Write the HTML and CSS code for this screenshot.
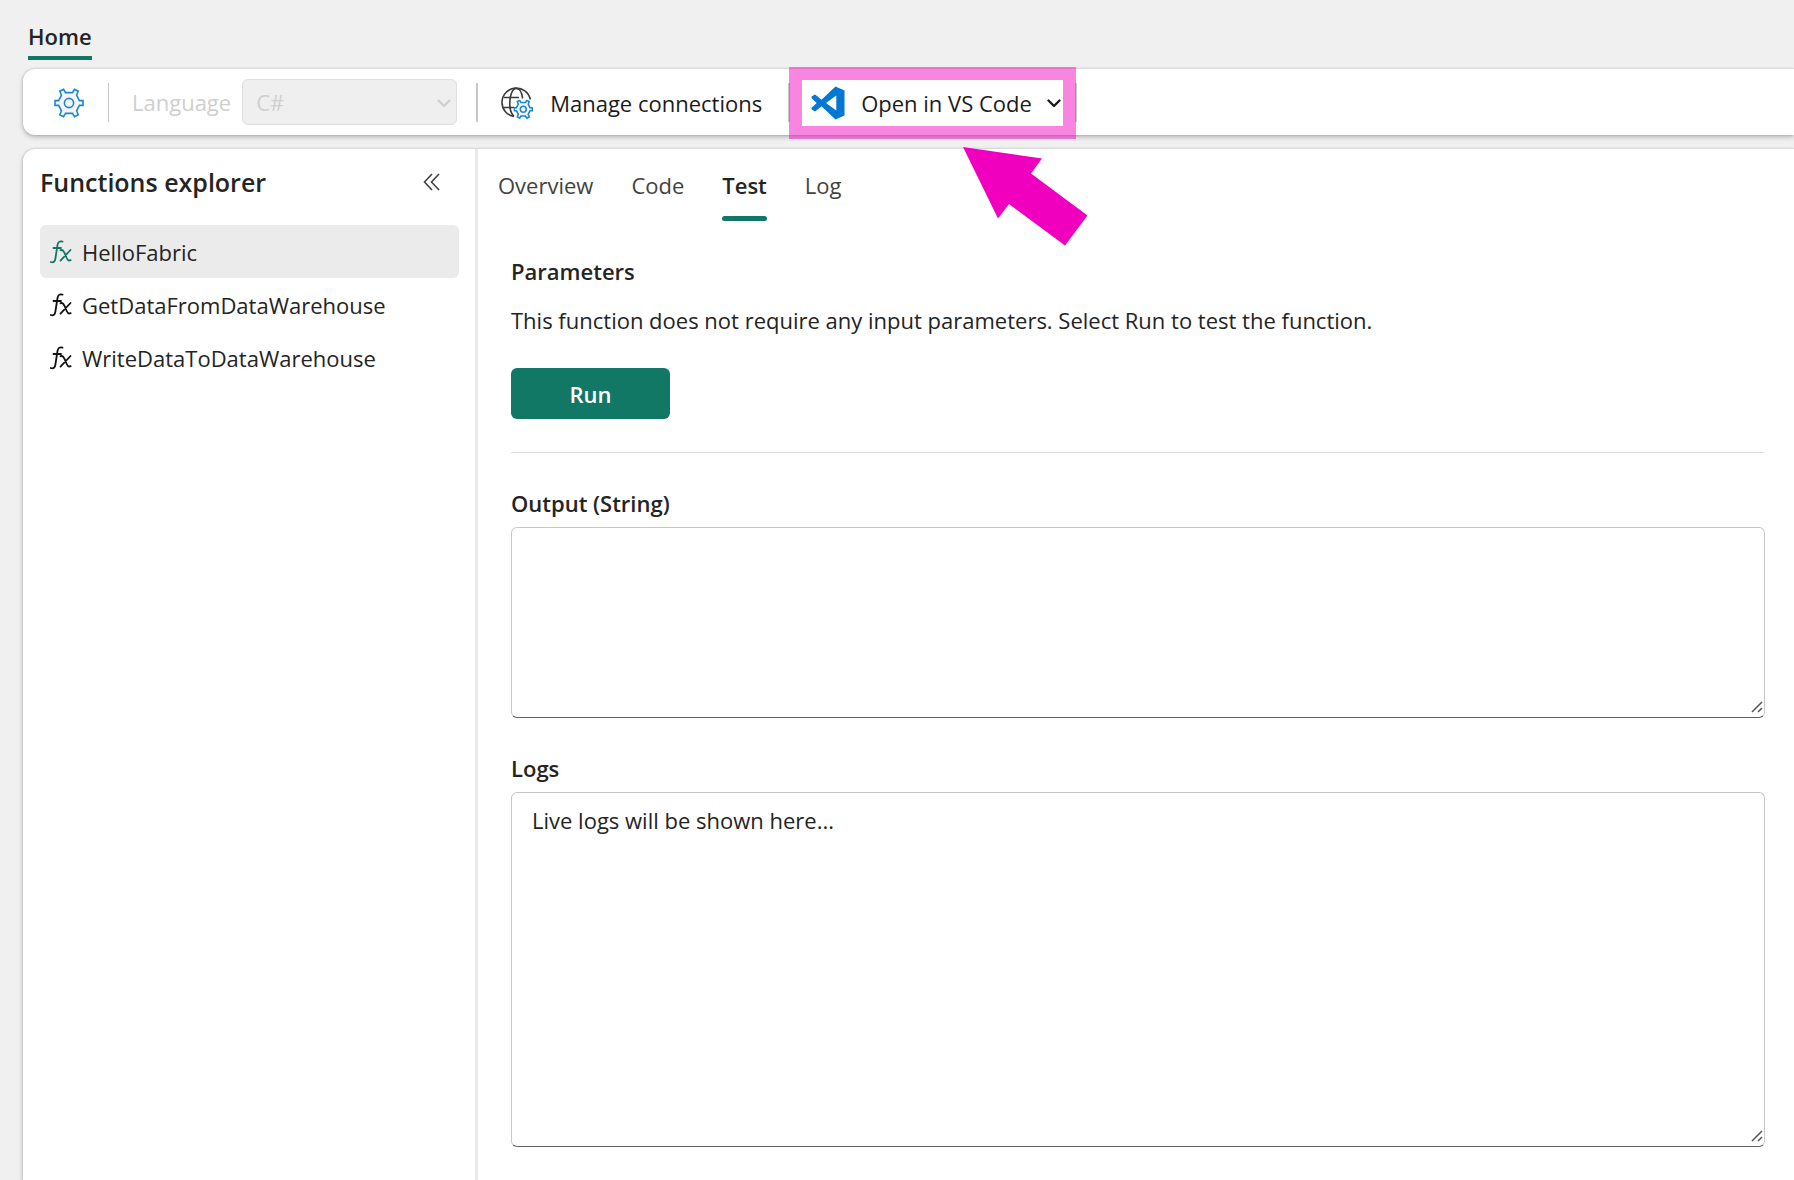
FILE: index.html
```html
<!DOCTYPE html>
<html lang="en">
  <head>
    <meta charset="utf-8" />
    <meta name="viewport" content="width=device-width, initial-scale=1" />
    <title>Functions | Test</title>
    <link rel="stylesheet" href="styles.css">
  </head>

  <body>
    <!-- shared icons -->
    <svg class="sprite" aria-hidden="true">
      <symbol id="fx" viewBox="0 0 22 24">
        <path d="M12.5 1.6C9.5.6 8 2.200 7.500 5L5.400 18.500C5 21.500 3.500 23 .8 22M3.500 8h7.500" />
        <path d="M10.500 10.200c2-.8 3 .4 4 2.600l2.200 5.200c.8 2 2 3 4 2.200M20.500 10L10.500 20.600" />
      </symbol>
      <symbol id="gear" viewBox="0 0 30 30">
        <path d="M9.500 1.200L11.500 4.600H18.500L20.500 1.200L24.200 3.200L22.600 7.200L25.400 12.600H29V17.400H25.400L22.600 22.800L24.200 26.800L20.500 28.800L18.500 25.400H11.500L9.500 28.800L5.800 26.800L7.400 22.800L4.600 17.400H1V12.600H4.600L7.400 7.200L5.800 3.200Z" />
        <circle cx="15" cy="15" r="4.600" />
      </symbol>
      <symbol id="chevron" viewBox="0 0 14 9">
        <path d="M1.500 1.500L7 7L12.500 1.500" />
      </symbol>
      <symbol id="grip" viewBox="0 0 12 12">
        <path d="M1 11L11 1M7 11L11 7" />
      </symbol>
    </svg>

    <header>
      <nav class="ribbon-tabs">
        <a href="#" class="ribbon-tab">Home</a>
      </nav>
    </header>

    <div class="toolbar">
      <button type="button" class="settings" aria-label="Settings">
        <svg class="icon-gear"><use href="#gear" /></svg>
      </button>
      <span class="divider thin"></span>
      <div class="language">
        <label for="language">Language</label>
        <span class="select-wrap">
          <select id="language" disabled>
            <option>C#</option>
          </select>
          <svg class="chevron"><use href="#chevron" /></svg>
        </span>
      </div>
      <span class="divider"></span>
      <button type="button" class="tool connections">
        <svg class="icon-globe" viewBox="0 0 32 32">
          <g class="globe">
            <path d="M13 29.500A14.300 14.300 0 1 1 29.300 12.500" />
            <path d="M13 29.500C9.500 26 8.500 20 8.800 15C9 9 11 1.500 15.300 1.500C19 1.500 21 6 21.600 11.500" />
            <path d="M3 10.500H18M2 20.500H13" />
          </g>
          <svg x="12.500" y="12.500" width="19.500" height="19.500" viewBox="0 0 30 30" class="small-gear"><use href="#gear" /></svg>
        </svg>
        Manage connections
      </button>
      <span class="divider"></span>
      <div class="vscode">
        <button type="button" class="tool">
          <svg class="icon-vscode" viewBox="0 0 34 34">
            <path fill-rule="evenodd" d="M24.500.5L33.500 4.500V29.500L24.500 33.500L10.500 20.300L4 25.400L.6 23.400V21.800L5.700 17L.6 12.200V10.600L4 8.600L10.500 13.700ZM25.300 9.500L15 17L25.300 24.500Z" />
          </svg>
          <span>Open in VS Code</span>
          <svg class="chevron"><use href="#chevron" /></svg>
        </button>
        <span class="highlight"></span>
        <svg class="arrow" viewBox="0 0 125 100">
          <path d="M0 0L79 11.500L68 26.500L124.500 68.500L102 98.500L46 57L35 71.500Z" />
        </svg>
      </div>
      <span class="divider"></span>
    </div>

    <div class="workspace">
      <aside class="explorer">
        <div class="explorer-head">
          <h2>Functions explorer</h2>
          <button type="button" aria-label="Collapse">
            <svg class="icon-collapse" viewBox="0 0 18 18"><path d="M9 1L1.500 9L9 17M16 1L8.500 9L16 17" /></svg>
          </button>
        </div>
        <ul>
          <li><a href="#" class="selected"><svg class="icon-fx"><use href="#fx" /></svg>HelloFabric</a></li>
          <li><a href="#"><svg class="icon-fx"><use href="#fx" /></svg>GetDataFromDataWarehouse</a></li>
          <li><a href="#"><svg class="icon-fx"><use href="#fx" /></svg>WriteDataToDataWarehouse</a></li>
        </ul>
      </aside>

      <main>
        <nav class="tabs">
          <a href="#">Overview</a>
          <a href="#">Code</a>
          <a href="#" class="active">Test</a>
          <a href="#">Log</a>
        </nav>

        <section class="params">
          <h3>Parameters</h3>
          <p>This function does not require any input parameters. Select Run to test the function.</p>
          <button type="button" class="run">Run</button>
        </section>

        <div class="field">
          <label for="output">Output (String)</label>
          <div class="area">
            <textarea id="output" class="output" readonly></textarea>
            <svg class="grip"><use href="#grip" /></svg>
          </div>
        </div>

        <div class="field">
          <label for="logs">Logs</label>
          <div class="area">
            <textarea id="logs" class="logs" readonly>Live logs will be shown here...</textarea>
            <svg class="grip"><use href="#grip" /></svg>
          </div>
        </div>
      </main>
    </div>
  </body>
</html>
```
FILE: styles.css
```css
/* ------------------------------ reset ------------------------------ */
* {
  margin: 0;
  padding: 0;
  box-sizing: border-box;
}
body {
  min-height: 100vh;
  display: flex;
  flex-direction: column;
  overflow-x: hidden;
  background: #f0f0f0;
  color: #242424;
  font-family: "Segoe UI", "Open Sans", sans-serif;
  font-size: 22px;
  line-height: 32px;
}
button,
select,
textarea {
  font: inherit;
  color: inherit;
  border: 0;
  background: none;
}
a {
  color: inherit;
  text-decoration: none;
}
ul {
  list-style: none;
}
svg {
  flex: none;
  fill: none;
  stroke: currentColor;
}
.sprite {
  position: absolute;
  width: 0;
  height: 0;
}

/* ------------------------------ ribbon ------------------------------ */
.ribbon-tabs {
  display: flex;
  padding: 20px 28px 9px;
}
.ribbon-tab {
  height: 40px;
  border-bottom: 4px solid #117865;
  font-weight: 600;
}

.toolbar {
  display: flex;
  align-items: center;
  height: 66px;
  margin-left: 23px;
  background: #fff;
  border-radius: 12px 0 0 12px;
  box-shadow: 0 0 2px rgba(0, 0, 0, 0.2), 0 2px 5px rgba(0, 0, 0, 0.25);
  white-space: nowrap;
}
.divider {
  width: 2px;
  height: 39px;
  background: #c8c8c8;
}
.divider.thin {
  width: 1px;
}
.settings {
  display: flex;
  padding: 1px 24px 0 31px;
}
.icon-gear {
  width: 30px;
  height: 30px;
  color: #1b87d0;
  fill: #f5f5f5;
  stroke-width: 1.6;
}
.language {
  display: flex;
  align-items: center;
  gap: 11px;
  padding: 0 19px 0 23px;
  color: #cfcfcf;
}
.select-wrap {
  position: relative;
  display: flex;
}
.select-wrap select {
  appearance: none;
  width: 215px;
  height: 46px;
  padding: 0 13px;
  background: #efefef;
  border: 1px solid #dedede;
  border-radius: 6px;
  opacity: 1;
}
.select-wrap .chevron {
  position: absolute;
  right: 6px;
  top: 20px;
}
.chevron {
  width: 14px;
  height: 9px;
  stroke-width: 2.4;
  stroke-linecap: round;
  stroke-linejoin: round;
}
.tool {
  display: flex;
  align-items: center;
  gap: 17px;
  height: 48px;
  padding-top: 2px;
  color: #1b1b1b;
}
.tool.connections {
  padding: 2px 26px 0 23px;
}
.icon-globe {
  width: 32px;
  height: 32px;
}
.globe {
  stroke: #3b3a39;
  stroke-width: 1.6;
}
.small-gear {
  color: #1b87d0;
  fill: #f5f5f5;
  stroke-width: 2.4;
}
.icon-vscode {
  width: 34px;
  height: 34px;
  fill: #0078d4;
  stroke: none;
}
.vscode {
  position: relative;
  padding: 0 14px 0 21px;
}
.vscode .tool {
  gap: 16px;
}
.vscode .tool .chevron {
  margin-left: -1px;
}

/* callout over the VS Code button */
.highlight {
  position: absolute;
  inset: -11px -1px -13px;
  border: 13px solid rgba(240, 0, 190, 0.48);
}
.arrow {
  position: absolute;
  z-index: 1;
  left: 173px;
  top: 69px;
  width: 125px;
  height: 100px;
  fill: #f000be;
  stroke: none;
}

/* ------------------------------ explorer ------------------------------ */
.workspace {
  flex: 1;
  display: flex;
  margin: 14px 0 0 23px;
  background: #fff;
  border-radius: 12px 0 0 0;
  box-shadow: 0 0 2px rgba(0, 0, 0, 0.2), 0 2px 5px rgba(0, 0, 0, 0.25);
}
.explorer {
  flex: none;
  width: 455px;
  padding: 16px 16px 0 17px;
  border-right: 3px solid #eaeaea;
}
.explorer-head {
  display: flex;
  align-items: center;
  justify-content: space-between;
  padding-right: 18px;
  margin-bottom: 26px;
}
.explorer-head button {
  display: flex;
}
h2 {
  font-size: 25px;
  font-weight: 600;
  line-height: 34px;
}
.icon-collapse {
  width: 18px;
  height: 18px;
  color: #424242;
  stroke-width: 1.6;
}
.explorer li a {
  display: flex;
  align-items: center;
  gap: 10px;
  height: 53px;
  padding: 0 10px;
  border-radius: 6px;
}
.explorer li a.selected {
  background: #ebebeb;
}
.icon-fx {
  width: 22px;
  height: 24px;
  color: #111;
  stroke-width: 1.8;
  stroke-linecap: round;
}
.selected .icon-fx {
  color: #117865;
}

/* ------------------------------ test pane ------------------------------ */
main {
  flex: 1;
  min-width: 0;
  padding: 20px 29px 32px 33px;
}
.tabs {
  display: flex;
  gap: 38px;
  margin-left: -13px;
  color: #424242;
}
.tabs a {
  height: 52px;
}
.tabs a.active {
  position: relative;
  color: #242424;
  font-weight: 600;
}
.tabs a.active::after {
  content: "";
  position: absolute;
  left: 0;
  right: 0;
  bottom: 0;
  height: 5px;
  border-radius: 3px;
  background: #117865;
}
.params {
  padding: 34px 0 33px;
  border-bottom: 1px solid #dedede;
}
h3,
.field label {
  display: block;
  font-size: 22px;
  font-weight: 600;
  line-height: 32px;
}
.params p {
  padding: 17px 0 32px;
}
.run {
  width: 159px;
  height: 51px;
  background: #117865;
  border-radius: 6px;
  color: #fff;
  font-weight: 600;
}
.field {
  padding-top: 34px;
}
.field label {
  padding-bottom: 8px;
}
.area {
  position: relative;
}
textarea {
  display: block;
  width: 100%;
  padding: 11px 20px;
  border: 1px solid #c8c8c8;
  border-bottom-color: #616161;
  border-radius: 6px;
  resize: none;
}
.output {
  height: 191px;
}
.logs {
  height: 355px;
}
.grip {
  position: absolute;
  right: 2px;
  bottom: 5px;
  width: 12px;
  height: 12px;
  color: #555;
  stroke-width: 1.5;
}
```
